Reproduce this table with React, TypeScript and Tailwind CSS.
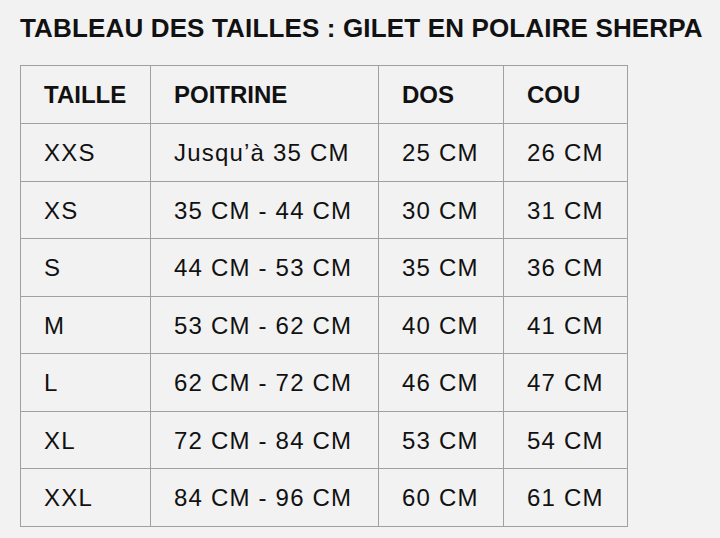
const rows = [
  ["XXS", "Jusqu’à 35 CM", "25 CM", "26 CM"],
  ["XS", "35 CM - 44 CM", "30 CM", "31 CM"],
  ["S", "44 CM - 53 CM", "35 CM", "36 CM"],
  ["M", "53 CM - 62 CM", "40 CM", "41 CM"],
  ["L", "62 CM - 72 CM", "46 CM", "47 CM"],
  ["XL", "72 CM - 84 CM", "53 CM", "54 CM"],
  ["XXL", "84 CM - 96 CM", "60 CM", "61 CM"],
];

const headers = ["TAILLE", "POITRINE", "DOS", "COU"];
const widths = ["w-[130px]", "w-[228px]", "w-[125px]", "w-[124px]"];

export default function App() {
  return (
    <div className="min-h-[538px] w-[720px] bg-[#f2f2f2] font-['Liberation_Sans',Arial,sans-serif] text-[#111]">
      <h1 className="pl-[20px] pt-[13px] text-[26px] font-bold leading-[30px] tracking-[0.15px]">
        TABLEAU DES TAILLES : GILET EN POLAIRE SHERPA
      </h1>
      <table className="ml-[20px] mt-[22px] table-fixed border-collapse border border-[#a0a0a0] text-[24px]">
        <thead>
          <tr className="h-[58px]">
            {headers.map((h, i) => (
              <th
                key={h}
                className={`${widths[i]} border border-[#a0a0a0] pl-[23px] text-left font-bold`}
              >
                {h}
              </th>
            ))}
          </tr>
        </thead>
        <tbody>
          {rows.map((r) => (
            <tr key={r[0]} className="h-[57.5px]">
              {r.map((c, i) => (
                <td key={i} className="border border-[#a0a0a0] pl-[23px] pt-[2px] tracking-[1.2px]">
                  {c}
                </td>
              ))}
            </tr>
          ))}
        </tbody>
      </table>
    </div>
  );
}
